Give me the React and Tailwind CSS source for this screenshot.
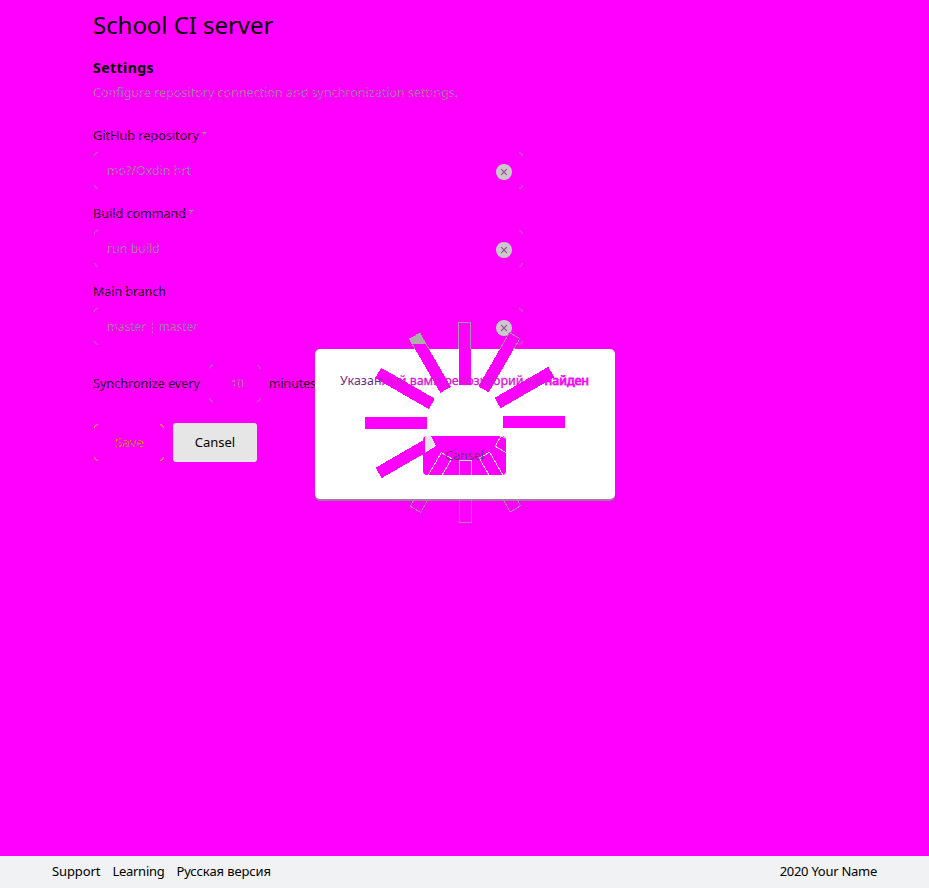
import React from "react";

function ClearIcon() {
  return (
    <svg viewBox="0 0 16 16" className="mt-[3px] h-4 w-4 shrink-0" aria-hidden="true">
      <circle cx="8" cy="8" r="8" fill="#c9c9c9" />
      <path d="M5.2 5.2l5.6 5.6M10.8 5.2l-5.6 5.6" stroke="#9b4a9b" strokeWidth="1.2" />
    </svg>
  );
}

function Corners({ w, h, color }) {
  return (
    <svg viewBox={`0 0 ${w} ${h}`} className="absolute inset-0 h-full w-full" fill="none" stroke={color} aria-hidden="true">
      <path d={`M1.5 5V4Q2 1.5 5 1.5M${w - 5} 1.5Q${w - 2} 1.5 ${w - 1.5} 5M1.5 ${h - 5}Q2 ${h - 1.5} 5 ${h - 1.5}M${w - 5} ${h - 1.5}Q${w - 2} ${h - 1.5} ${w - 1.5} ${h - 5}`} />
    </svg>
  );
}

// Colour tones for text of which only part of the pixels differs.
function Tones() {
  const tones = [
    ["ink", "#0c000c", "#a000a0"],
    ["muted", "#9a889a", "#f014f0"],
    ["save", "#d39018", "#b0308c"],
    ["violet", "#5c3472", "#d010d0"],
    ["pink", "#c81cc4", "#ff00ff"],
  ];
  return (
    <svg className="absolute h-0 w-0" aria-hidden="true">
      <defs>
        {tones.map(([id, main, gap]) => (
          <pattern key={id} id={id} width="7" height="4" patternUnits="userSpaceOnUse">
            <rect width="7" height="4" fill={main} />
            <path d="M2 0h2v2h-2zM5 2h1v2h-1zM0 3h1v1h-1z" fill={gap} />
          </pattern>
        ))}
      </defs>
    </svg>
  );
}

const fills = { ink: "url(#ink)", muted: "url(#muted)", save: "url(#save)" };

function DiffText({ children, width, tone = "ink" }) {
  return (
    <svg width={width} height="20" className="shrink-0 overflow-visible">
      <text x="0" y="14" fontSize="13" fill={fills[tone]} textLength={width} lengthAdjust="spacingAndGlyphs">{children}</text>
    </svg>
  );
}

function Field({ label, labelWidth, required, value, width }) {
  return (
    <div className="h-[78px]">
      <div className="flex h-[25px] gap-[3px]">
        <DiffText width={labelWidth}>{label}</DiffText>
        {required && <DiffText width={5} tone="muted">*</DiffText>}
      </div>
      <div className="relative flex h-[39px] w-[431px] items-center justify-between pr-[12px] pl-[14px]">
        <Corners w={431} h={39} color="#a878a8" />
        <DiffText width={width} tone="muted">{value}</DiffText>
        <ClearIcon />
      </div>
    </div>
  );
}

const spokes = [0, 30, 60, 90, 270, 300, 330, 240];
const lowerSpokes = [120, 150, 180, 210];

function Bars({ angles, ...props }) {
  return angles.map((a) => (
    <rect key={a} x="458.5" y="322.5" width="12" height="62" transform={`rotate(${a} 465 422.5)`} {...props} />
  ));
}

function Spinner() {
  return (
    <svg className="pointer-events-none absolute inset-0" width="929" height="888" shapeRendering="crispEdges" aria-hidden="true">
      <defs>
        <clipPath id="card"><rect x="315" y="349" width="300" height="150" rx="5" /></clipPath>
        <clipPath id="button"><rect x="423" y="436" width="83" height="39" rx="4" /></clipPath>
        <clipPath id="above"><rect x="315" y="315" width="300" height="34" /></clipPath>
        <clipPath id="below"><rect x="315" y="499" width="300" height="30" /></clipPath>
        <clipPath id="tip"><rect x="400" y="315" width="35" height="29" /></clipPath>
      </defs>
      <g clipPath="url(#card)"><Bars angles={spokes} fill="#ff00ff" /></g>
      <g clipPath="url(#above)"><Bars angles={[0, 30, 330]} fill="#ff00ff" stroke="#a98fa9" /></g>
      <g clipPath="url(#tip)"><Bars angles={[330]} fill="#adadad" /></g>
      <g clipPath="url(#button)">
        <Bars angles={lowerSpokes} fill="none" stroke="#e6d6e6" />
        <path d="M425 436h6l5 10-11 7z" fill="#e6e6e6" />
      </g>
      <g clipPath="url(#below)"><Bars angles={[150, 180, 210]} fill="none" stroke="#b082b0" /></g>
    </svg>
  );
}

function Modal() {
  return (
    <div className="absolute top-[349px] left-[315px] flex h-[150px] w-[300px] flex-col rounded-[5px] bg-white pt-[87px] pl-[108px] shadow-[0_2px_0_0_#a07aa0]">
      <div className="h-[39px] w-[83px] rounded bg-[#ff00ff]" />
    </div>
  );
}

function ModalText() {
  return (
    <svg className="pointer-events-none absolute inset-0" width="929" height="888">
      <text x="340" y="385" fontSize="13" textLength="249" lengthAdjust="spacingAndGlyphs" fill="url(#pink)" stroke="#d81cd8" strokeWidth=".3">
        <tspan fill="url(#violet)" stroke="none">Указан</tspan>ный вами репозиторий не <tspan stroke="#ff00ff" strokeWidth=".8">найден</tspan>
      </text>
      <text x="445" y="460" fontSize="13" textLength="39" lengthAdjust="spacingAndGlyphs" fill="url(#violet)">Cansel</text>
    </svg>
  );
}

export default function App() {
  return (
    <div className="relative flex h-[888px] w-[929px] flex-col overflow-hidden bg-[#ff00ff] font-['Noto_Sans',sans-serif] text-black">
      <Tones />
      <header className="h-[57px] px-[93px] pt-[8px]">
        <h1 className="text-[24px] leading-[33px] tracking-[-0.05px]">School CI server</h1>
      </header>
      <main className="flex-1 px-[93px]">
        <h2 className="h-[26px] text-[14px] leading-[22px] font-bold tracking-[0.45px]">Settings</h2>
        <div className="h-[43px]">
          <DiffText width={365} tone="muted">Configure repository connection and synchronization settings.</DiffText>
        </div>
        <Field label="GitHub repository" labelWidth={106} required value="mo?/Oxdin hrt" width={84} />
        <Field label="Build command" labelWidth={93} required value="run build" width={53} />
        <Field label="Main branch" labelWidth={73} value="master | master" width={91} />
        <div className="mt-[4px] flex h-[39px] items-center">
          <div className="w-[115px]"><DiffText width={107}>Synchronize every</DiffText></div>
          <div className="relative flex h-[39px] w-[54px] items-center justify-center pl-1">
            <Corners w={54} h={39} color="#a878a8" />
            <DiffText width={13} tone="muted">10</DiffText>
          </div>
          <div className="ml-[7px]"><DiffText width={47}>minutes</DiffText></div>
        </div>
        <div className="mt-[20px] flex gap-[8px] text-[13px]">
          <button className="relative flex h-[39px] w-[72px] items-center justify-center">
            <Corners w={72} h={39} color="#ffb52c" />
            <DiffText width={29} tone="save">Save</DiffText>
          </button>
          <button className="h-[39px] w-[84px] rounded-[3px] bg-[#e6e6e6]">Cansel</button>
        </div>
      </main>
      <footer className="flex h-[32px] items-center justify-between bg-[#f0f2f4] px-[52px] text-[13px] tracking-[-0.27px]">
        <nav className="flex gap-[12px]">
          <a className="tracking-[-0.1px]">Support</a>
          <a>Learning</a>
          <a className="tracking-[-0.1px]">Русская версия</a>
        </nav>
        <span>2020 Your Name</span>
      </footer>
      <Modal />
      <Spinner />
      <ModalText />
    </div>
  );
}
